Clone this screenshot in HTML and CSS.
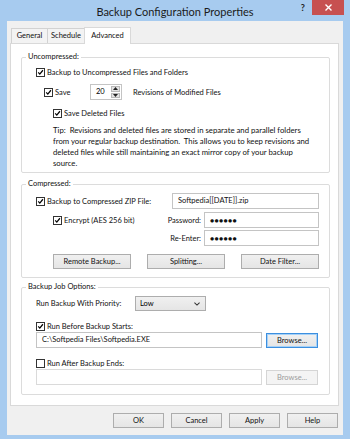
FILE: index.html
```html
<!DOCTYPE html>
<html>
<head>
<meta charset="utf-8">
<link rel="stylesheet" href="styles.css">
</head>
<body>
<div class="window">
  <div class="titlebar">
    <div class="tb-side"></div>
    <div class="title">Backup Configuration Properties</div>
    <div class="tb-side tb-controls">
      <span class="help">?</span>
      <span class="close"><svg width="7" height="7" viewBox="0 0 7 7"><path d="M0.5 0.5L6.5 6.5M6.5 0.5L0.5 6.5" stroke="#fff" stroke-width="1.4"/></svg></span>
    </div>
  </div>
  <div class="frame">
    <div class="client">
      <div class="tabs">
        <div class="tab t-general">General</div>
        <div class="tab t-schedule">Schedule</div>
        <div class="tab t-advanced active">Advanced</div>
      </div>
      <div class="panel">
        <fieldset class="group g1">
          <legend>Uncompressed:</legend>
          <div class="row r-chk ind1">
            <span class="cb on"><svg viewBox="0 0 9 9"><path d="M1.6 4.4L3.6 6.6L7.6 1.6" /></svg></span>
            <span class="lbl">Backup to Uncompressed Files and Folders</span>
          </div>
          <div class="row r-spin ind2">
            <span class="cb on"><svg viewBox="0 0 9 9"><path d="M1.6 4.4L3.6 6.6L7.6 1.6" /></svg></span>
            <span class="lbl w-save">Save</span>
            <span class="spin"><span class="spin-val">20</span><span class="spin-btns"><span class="sb up"><svg viewBox="0 0 5 3"><path d="M0 3L2.5 0L5 3Z"/></svg></span><span class="sb down"><svg viewBox="0 0 5 3"><path d="M0 0L2.5 3L5 0Z"/></svg></span></span></span>
            <span class="lbl rev">Revisions of Modified Files</span>
          </div>
          <div class="row r-chk2 ind3">
            <span class="cb on"><svg viewBox="0 0 9 9"><path d="M1.6 4.4L3.6 6.6L7.6 1.6" /></svg></span>
            <span class="lbl">Save Deleted Files</span>
          </div>
          <div class="tip ind3">Tip:&nbsp; Revisions and deleted files are stored in separate and parallel folders<br>from your regular backup destination.&nbsp; This allows you to keep revisions and<br>deleted files while still maintaining an exact mirror copy of your backup<br>source.</div>
        </fieldset>

        <fieldset class="group g2">
          <legend>Compressed:</legend>
          <div class="row r-field ind1 rA">
            <span class="cb on"><svg viewBox="0 0 9 9"><path d="M1.6 4.4L3.6 6.6L7.6 1.6" /></svg></span>
            <span class="lbl grow">Backup to Compressed ZIP File:</span>
            <span class="field f-zip">Softpedia[[DATE]].zip</span>
          </div>
          <div class="row r-field ind3 rB">
            <span class="cb on"><svg viewBox="0 0 9 9"><path d="M1.6 4.4L3.6 6.6L7.6 1.6" /></svg></span>
            <span class="lbl grow">Encrypt (AES 256 bit)</span>
            <span class="lbl rlab">Password:</span>
            <span class="field f-pw">&#9679;&#9679;&#9679;&#9679;&#9679;&#9679;</span>
          </div>
          <div class="row r-field ind3 rC">
            <span class="grow"></span>
            <span class="lbl rlab">Re-Enter:</span>
            <span class="field f-pw">&#9679;&#9679;&#9679;&#9679;&#9679;&#9679;</span>
          </div>
          <div class="row r-btns ind3">
            <span class="btn">Remote Backup...</span>
            <span class="btn">Splitting...</span>
            <span class="btn">Date Filter...</span>
          </div>
        </fieldset>

        <fieldset class="group g3">
          <legend>Backup Job Options:</legend>
          <div class="row r-prio ind1">
            <span class="lbl w-prio">Run Backup With Priority:</span>
            <span class="select"><span class="sel-val">Low</span><svg class="chev" viewBox="0 0 7 4"><path d="M0.5 0.5L3.5 3.3L6.5 0.5"/></svg></span>
          </div>
          <div class="row r-chk3 ind1">
            <span class="cb on"><svg viewBox="0 0 9 9"><path d="M1.6 4.4L3.6 6.6L7.6 1.6" /></svg></span>
            <span class="lbl">Run Before Backup Starts:</span>
          </div>
          <div class="row r-path ind1">
            <span class="field f-path">C:\Softpedia Files\Softpedia.EXE</span>
            <span class="btn b-browse focus">Browse...</span>
          </div>
          <div class="row r-chk4 ind1">
            <span class="cb"></span>
            <span class="lbl">Run After Backup Ends:</span>
          </div>
          <div class="row r-path ind1">
            <span class="field f-path disabled"></span>
            <span class="btn b-browse disabled">Browse...</span>
          </div>
        </fieldset>
      </div>
      <div class="buttons">
        <span class="btn dlg">OK</span>
        <span class="btn dlg">Cancel</span>
        <span class="btn dlg">Apply</span>
        <span class="btn dlg">Help</span>
      </div>
    </div>
  </div>
</div>
</body>
</html>
```
FILE: styles.css
```css
* { box-sizing: border-box; margin: 0; padding: 0; }
html, body { width: 350px; height: 439px; overflow: hidden; }
body {
  font-family: "Lato", "Open Sans", sans-serif;
  font-size: 7.5px;
  color: #000;
  background: #a7cbef;
}
.window {
  width: 350px;
  height: 439px;
  display: flex;
  flex-direction: column;
  background: #a7cbef;
  overflow: hidden;
}
.titlebar {
  height: 21px;
  display: grid;
  grid-template-columns: 1fr auto 1fr;
  align-items: start;
}
.title {
  font-size: 11px;
  line-height: 23px;
  color: #1b1b1b;
  white-space: nowrap;
}
.tb-controls {
  display: flex;
  justify-content: flex-end;
  align-items: flex-start;
}
.help {
  font-weight: bold;
  font-size: 9px;
  line-height: 16px;
  color: #222;
  margin-right: 7px;
}
.close {
  width: 32px;
  height: 15px;
  background: #c75050;
  display: flex;
  align-items: center;
  justify-content: center;
  margin-right: 6px;
}
.close svg { display: block; }
.frame {
  flex: 1;
  display: flex;
  padding: 0 7px 4px 7px;
  min-width: 0;
}
.client {
  flex: 1;
  min-width: 0;
  background: #f0f0f0;
  display: flex;
  flex-direction: column;
  padding: 6px 4px 0 3px;
}
.tabs {
  height: 16px;
  display: flex;
  align-items: flex-start;
  padding-left: 1px;
}
.tab {
  height: 15px;
  margin-top: 1px;
  border: 1px solid #d2d2d2;
  border-bottom: none;
  background: #f3f3f3;
  line-height: 13px;
  text-align: center;
  color: #111;
  white-space: nowrap;
}
.t-general { width: 37px; }
.t-schedule { width: 38px; margin-left: -1px; }
.tab.active {
  width: 47px;
  height: 17px;
  margin-top: 0;
  margin-left: -1px;
  background: #fff;
  border-color: #d9d9d9;
  position: relative;
  z-index: 1;
  line-height: 15px;
}
.panel {
  height: 363px;
  min-width: 0;
  border: 1px solid #d9d9d9;
  background: #fff;
  padding: 0 8px 0 10px;
  display: flex;
  flex-direction: column;
}
.group {
  border: 1px solid #dcdcdc;
  border-radius: 2px;
  padding: 0 10px 0 0;
  min-width: 0;
}
.group legend {
  line-height: 12px;
  padding: 0 2px;
  margin-left: 4px;
  color: #111;
}
.g1 { margin-top: 7px; height: 122px; }
.g2 { margin-top: 5px; height: 100px; }
.g3 { margin-top: 3px; height: 114px; }

.row { display: flex; align-items: center; white-space: nowrap; }
.ind1 { padding-left: 14px; }
.ind2 { padding-left: 22px; }
.ind3 { padding-left: 31px; }
.cb {
  width: 9px;
  height: 9px;
  border: 1px solid #333;
  background: #fff;
  flex: none;
  display: block;
}
.cb svg { display: block; width: 7px; height: 7px; }
.cb svg path { fill: none; stroke: #000; stroke-width: 1.6; }
.lbl { margin-left: 2px; color: #111; }
.grow { flex: 1; }

.r-chk { height: 11px; margin-top: 4px; }
.r-spin { height: 16px; margin-top: 6px; }
.w-save { width: 35px; }
.spin {
  width: 32px;
  height: 16px;
  border: 1px solid #c4c4c4;
  background: #fff;
  display: flex;
  align-items: stretch;
}
.spin-val { flex: 1; padding-left: 5px; line-height: 14px; }
.spin-btns {
  width: 10px;
  display: flex;
  flex-direction: column;
  padding: 1px 1px 1px 0;
  gap: 1px;
}
.sb {
  flex: 1;
  background: #e3e3e3;
  border: 1px solid #b9b9b9;
  display: flex;
  align-items: center;
  justify-content: center;
}
.sb svg { width: 5px; height: 3px; display: block; }
.sb svg path { fill: #222; }
.rev { margin-left: 11px; }
.r-chk2 { height: 11px; margin-top: 8px; }
.tip {
  margin-top: 6px;
  font-size: 7.75px;
  line-height: 11px;
  white-space: nowrap;
  color: #111;
}

.r-field { height: 16px; }
.rA { margin-top: 3px; }
.rB { margin-top: 3px; }
.rC { margin-top: 2px; }
.field {
  height: 16px;
  border: 1px solid #c4c4c4;
  background: #fff;
  line-height: 14px;
  padding-left: 5px;
  color: #111;
  flex: none;
}
.f-zip { width: 147px; }
.f-pw { width: 115px; margin-left: 3px; font-size: 7px; letter-spacing: 0.3px; }
.rlab { text-align: right; }

.btn {
  height: 15px;
  border: 1px solid #adadad;
  background: linear-gradient(#f0f0f0, #e5e5e5);
  display: flex;
  align-items: center;
  justify-content: center;
  color: #111;
  white-space: nowrap;
  flex: none;
}
.r-btns { margin-top: 8px; gap: 16px; }
.r-btns .btn { width: 78px; }

.r-prio { height: 15px; margin-top: 3px; }
.w-prio { width: 99px; margin-left: 0; }
.select {
  width: 71px;
  height: 15px;
  border: 1px solid #adadad;
  background: linear-gradient(#f0f0f0, #e5e5e5);
  display: flex;
  align-items: center;
  padding: 0 5px 0 4px;
}
.sel-val { flex: 1; }
.chev { width: 6px; height: 4px; display: block; }
.chev path { fill: none; stroke: #333; stroke-width: 1.2; }
.r-chk3 { height: 11px; margin-top: 10px; }
.r-chk4 { height: 11px; margin-top: 10px; }
.r-path { height: 16px; }
.f-path { width: 226px; }
.b-browse { width: 52px; margin-left: 4px; }
.btn.focus { border-color: #3c8fdf; box-shadow: inset 0 0 0 1px #a6d1f7; }
.field.disabled { border-color: #dadada; }
.btn.disabled { border-color: #d5d5d5; background: #f4f4f4; color: #9c9c9c; }

.buttons {
  margin-top: 7px;
  display: flex;
  justify-content: flex-end;
  gap: 7px;
  padding-right: 1px;
}
.btn.dlg { width: 51px; height: 15px; }
```
